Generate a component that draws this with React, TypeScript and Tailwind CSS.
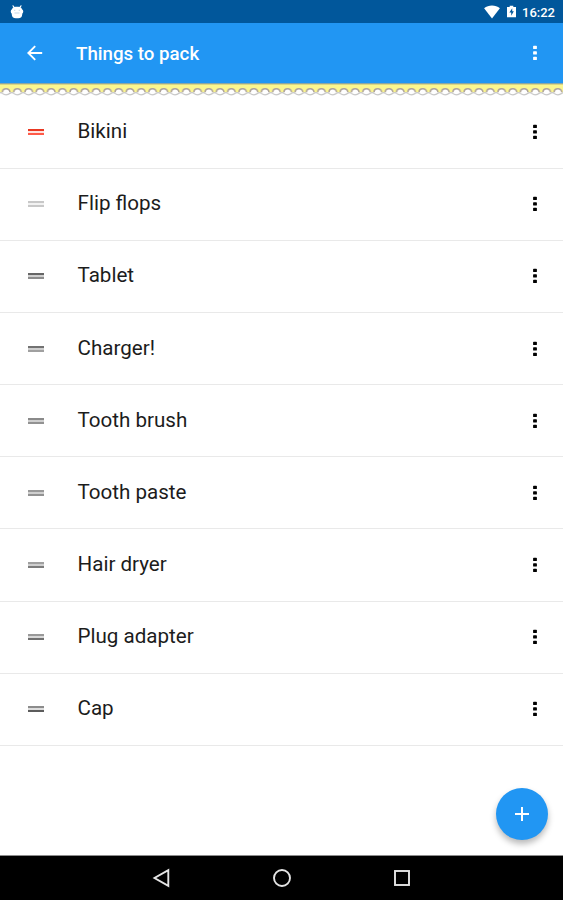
import { clsx } from 'clsx';

interface PackItem {
  label: string;
  topBar: string;
  bottomBar: string;
  gap: string;
}

const ITEMS: PackItem[] = [
  { label: 'Bikini', topBar: 'bg-[#e93822]', bottomBar: 'bg-[#ff5a48]', gap: 'bg-[#ffe3df]' },
  { label: 'Flip flops', topBar: 'bg-[#c8c8c8]', bottomBar: 'bg-[#c8c8c8]', gap: 'bg-[#f2f2f2]' },
  { label: 'Tablet', topBar: 'bg-[#666666]', bottomBar: 'bg-[#8c8c8c]', gap: 'bg-[#cfcfcf]' },
  { label: 'Charger!', topBar: 'bg-[#727272]', bottomBar: 'bg-[#a0a0a0]', gap: 'bg-[#cfcfcf]' },
  { label: 'Tooth brush', topBar: 'bg-[#8a8a8a]', bottomBar: 'bg-[#929292]', gap: 'bg-[#cfcfcf]' },
  { label: 'Tooth paste', topBar: 'bg-[#999999]', bottomBar: 'bg-[#929292]', gap: 'bg-[#cfcfcf]' },
  { label: 'Hair dryer', topBar: 'bg-[#a0a0a0]', bottomBar: 'bg-[#7c7c7c]', gap: 'bg-[#cfcfcf]' },
  { label: 'Plug adapter', topBar: 'bg-[#999999]', bottomBar: 'bg-[#707070]', gap: 'bg-[#d8d8d8]' },
  { label: 'Cap', topBar: 'bg-[#8c8c8c]', bottomBar: 'bg-[#5c5c5c]', gap: 'bg-[#dedede]' },
];

function MoreDots({ className }: { className?: string }) {
  return (
    <svg viewBox="0 0 4 16" className={clsx('h-4 w-1', className)} fill="currentColor">
      <rect x="0.1" y="0.8" width="3.8" height="3.3" rx="0.7" />
      <rect x="0.1" y="6.3" width="3.8" height="3.3" rx="0.7" />
      <rect x="0.1" y="11.8" width="3.8" height="3.3" rx="0.7" />
    </svg>
  );
}

function StatusBar() {
  return (
    <div className="flex h-[23px] items-center bg-[#01579b] pl-[10px] pr-[8px] text-white">
      <svg viewBox="0 0 14 14" className="h-3.5 w-3.5">
        <path d="M3 .8l1.5 2M11 .8L9.5 2.8" stroke="#fff" strokeWidth="1.1" strokeLinecap="round" />
        <rect x="1.8" y="1.8" width="10.4" height="11.4" rx="4" fill="#fff" />
        <rect x=".8" y="4.2" width="12.4" height="4.6" rx="1.8" fill="#fff" />
        <path d="M4 5.3h1.3M8.7 5.3H10M4.5 8h5" stroke="#b4cde1" strokeWidth=".8" />
      </svg>
      <svg viewBox="0 0 16 14" className="ml-auto h-3.5 w-4" fill="#fff">
        <path d="M8 13.6L.1 3.3C4.5-.3 11.5-.3 15.9 3.3z" />
      </svg>
      <svg viewBox="0 0 10 13" className="ml-[7px] h-[13px] w-[9px]">
        <path d="M3 0h4v1.500h3V13H0V1.500h3z" fill="#fff" />
        <path d="M5.8 2.800L2.600 7.700h2.100v3.500l2.900-4.900H5.800z" fill="#01579b" />
      </svg>
      <span className="ml-1.5 mt-0.5 w-[33px] whitespace-nowrap text-[13px] font-medium leading-none">16:22</span>
    </div>
  );
}

function Toolbar() {
  return (
    <header className="flex h-[60px] items-center bg-[#2196f3] pl-[27px] pr-[26px] text-white">
      <svg viewBox="0 0 16 16" className="h-4 w-4" fill="none" stroke="currentColor" strokeWidth="1.9">
        <path d="M15.2 8H1.6M8.2 1.1L1.3 8l6.9 6.9" />
      </svg>
      <h1 className="ml-[33px] mt-[2px] text-[18.7px] font-medium leading-6">Things to pack</h1>
      <MoreDots className="ml-auto" />
    </header>
  );
}

function ScallopEdge() {
  return (
    <svg width="563" height="14" className="block shrink-0">
      <defs>
        <pattern id="scallop" width="11.26" height="14" patternUnits="userSpaceOnUse" x="0.6">
          <path d="M0 0h11.26v9.300H0z" fill="#fbf68f" />
          <ellipse cx="5.630" cy="8.900" rx="3.700" ry="3.200" fill="#fff" />
          <path d="M1.900 9.200C1.900 4.600 9.360 4.600 9.360 9.200" fill="none" stroke="#aca09b" strokeWidth="1.500" />
          <path
            d="M0 9.700c1.200 0 1.500.2 2.200.9 1.800 1.700 5 1.700 6.860 0 .7-.7 1-.9 2.200-.9"
            fill="none"
            stroke="#c6c6c6"
            strokeWidth="1.300"
          />
        </pattern>
      </defs>
      <rect width="563" height="14" fill="url(#scallop)" />
      <rect width="563" height="1" fill="#8ba6a4" />
      <rect y="1" width="563" height="1" fill="#d9d683" />
    </svg>
  );
}

function PackRow({ item }: { item: PackItem }) {
  return (
    <li className="flex h-[72.17px] items-center border-b border-[#e9e9e9] pl-7 pr-[26px]">
      <div className={clsx('flex w-4 flex-col gap-[2px]', item.gap)}>
        <span className={clsx('h-[2px]', item.topBar)} />
        <span className={clsx('h-[2px]', item.bottomBar)} />
      </div>
      <span className="-mt-[2px] ml-[33.5px] text-[20.6px] leading-6 text-[#1c1c1c]">{item.label}</span>
      <MoreDots className="ml-auto text-black" />
    </li>
  );
}

function NavBar() {
  return (
    <nav className="flex h-[45px] items-center justify-between border-t border-[#8c8c8c] bg-black px-[152px]">
      <svg viewBox="0 0 18 20" className="h-5 w-[18px]" fill="none" stroke="#e4e4e4" strokeWidth="1.9">
        <path d="M16.3 2.200v15.600L2.500 10z" />
      </svg>
      <svg viewBox="0 0 20 20" className="h-5 w-5" fill="none" stroke="#e4e4e4" strokeWidth="1.9">
        <circle cx="10" cy="10" r="8" />
      </svg>
      <svg viewBox="0 0 18 18" className="h-[18px] w-[18px]" fill="none" stroke="#e4e4e4" strokeWidth="1.9">
        <rect x="2" y="2" width="14" height="14" />
      </svg>
    </nav>
  );
}

export default function App() {
  return (
    <div className="relative flex h-[900px] w-[563px] flex-col overflow-hidden bg-white font-[Roboto,sans-serif]">
      <StatusBar />
      <Toolbar />
      <ScallopEdge />
      <ul className="-mt-[0.5px] flex-1">
        {ITEMS.map((item) => (
          <PackRow key={item.label} item={item} />
        ))}
      </ul>
      <button
        aria-label="Add item"
        className="absolute bottom-[60px] right-[15px] flex h-[52px] w-[52px] items-center justify-center rounded-full bg-[#2196f3] shadow-[0_4px_6px_rgba(0,0,0,0.28)]"
      >
        <svg viewBox="0 0 14 14" className="h-3.5 w-3.5" stroke="#fff" strokeWidth="2">
          <path d="M7 0v14M0 7h14" />
        </svg>
      </button>
      <NavBar />
    </div>
  );
}
